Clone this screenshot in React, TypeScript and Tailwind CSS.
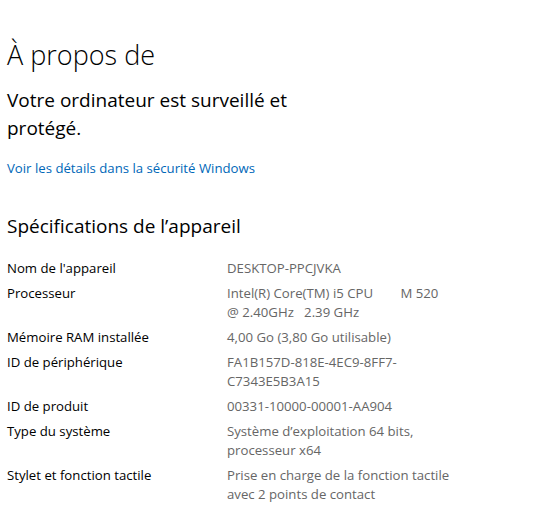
const specs: { label: string; value: string[] }[] = [
  { label: "Nom de l'appareil", value: ["DESKTOP-PPCJVKA"] },
  { label: "Processeur", value: ["Intel(R) Core(TM) i5 CPU        M 520", "@ 2.40GHz   2.39 GHz"] },
  { label: "Mémoire RAM installée", value: ["4,00 Go (3,80 Go utilisable)"] },
  { label: "ID de périphérique", value: ["FA1B157D-818E-4EC9-8FF7-", "C7343E5B3A15"] },
  { label: "ID de produit", value: ["00331-10000-00001-AA904"] },
  { label: "Type du système", value: ["Système d’exploitation 64 bits,", "processeur x64"] },
  { label: "Stylet et fonction tactile", value: ["Prise en charge de la fonction tactile", "avec 2 points de contact"] },
];

export default function App() {
  return (
    <div
      className="w-[539px] h-[517px] bg-white pl-[7px] pt-[35px] overflow-hidden text-black"
      style={{ fontFamily: "'Open Sans', 'Noto Sans', sans-serif" }}
    >
      <h1 className="text-[27px] leading-[40px] font-light">À propos de</h1>

      <p className="mt-[11px] text-[19px] leading-[28px]">
        Votre ordinateur est surveillé et
        <br />
        protégé.
      </p>

      <a className="block mt-[16px] text-[13.2px] leading-[20px] text-[#0067b8]">
        Voir les détails dans la sécurité Windows
      </a>

      <h2 className="mt-[34px] text-[19px] leading-[28px]">Spécifications de l’appareil</h2>

      <div className="mt-[19px] flex flex-col gap-[6px] text-[13.2px] leading-[19px]">
        {specs.map((s) => (
          <div key={s.label} className="flex">
            <div className="w-[220px] shrink-0">{s.label}</div>
            <div className="text-[#666666] whitespace-pre">
              {s.value.map((line) => (
                <div key={line}>{line}</div>
              ))}
            </div>
          </div>
        ))}
      </div>
    </div>
  );
}
